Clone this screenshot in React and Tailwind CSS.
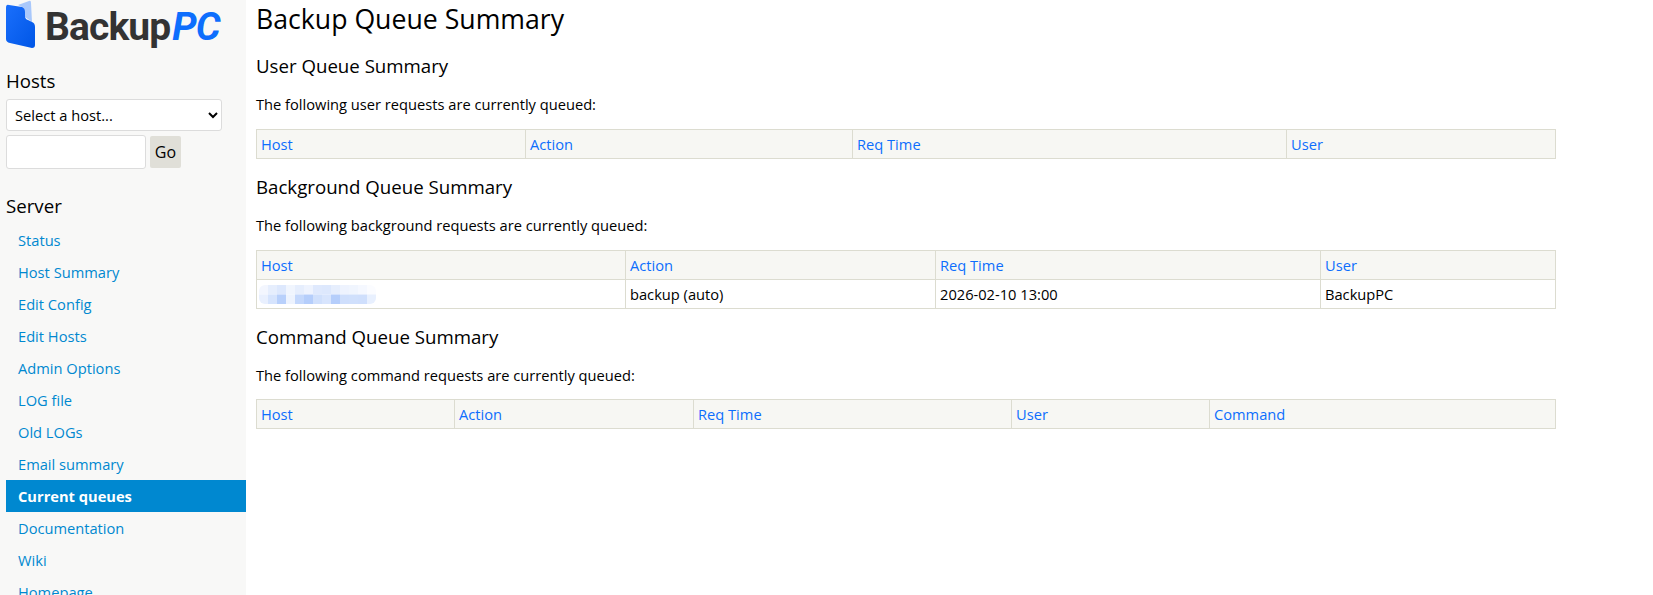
const font = { fontFamily: '"Open Sans", sans-serif' };

const navItems = [
  'Status',
  'Host Summary',
  'Edit Config',
  'Edit Hosts',
  'Admin Options',
  'LOG file',
  'Old LOGs',
  'Email summary',
  'Current queues',
  'Documentation',
  'Wiki',
  'Homepage',
];

// pixelated patch over the host name in the screenshot
const mosaic = [
  ['#f3f6fe', '#e6eefd', '#dde8fd', '#f0f5fe', '#e6eefd', '#eef3fe', '#dfe9fd', '#dde8fd', '#e6eefd', '#eef3fe', '#f0f5fe', '#f5f8ff', '#fbfcff'],
  ['#e9f0fe', '#d6e4fd', '#b8d0fb', '#edf3fe', '#c4d8fc', '#b5cefb', '#d0e0fc', '#d8e5fd', '#b5cefb', '#cfdffc', '#d0e0fc', '#cfdffc', '#e8f0fe'],
];

function Logo() {
  return (
    <div className="flex h-[50px] items-start">
      <svg width="44" height="50" viewBox="0 0 44 50" className="shrink-0">
        <defs>
          <linearGradient id="logoBlue" x1="0" y1="0" x2="1" y2="1">
            <stop offset="0" stopColor="#1a6ffc" />
            <stop offset="1" stopColor="#0056e6" />
          </linearGradient>
        </defs>
        <path d="M18 5 L29 1 Q31 0 31 3 L32 22 L25 17 L24 8 Z" fill="#a9c8fb" />
        <path d="M9 5 L22 7 Q25 8 25 12 L25 16 Q25 19 28 20 L32 22 Q35 23 35 27 L35 45 Q35 48 32 48 L10 43 Q6 42 6 39 L6 8 Q6 4 9 5 Z" fill="url(#logoBlue)" />
      </svg>
      <span className="ml-[1px] mt-[4px] whitespace-nowrap text-[39px] font-bold leading-[46px] tracking-[-0.9px] text-[#333333]" style={{ fontFamily: 'Roboto, sans-serif' }}>
        Backup<span className="ml-[2px] italic text-[#0d6efd]">PC</span>
      </span>
    </div>
  );
}

function Sidebar() {
  return (
    <aside className="h-[595px] w-[246px] shrink-0 overflow-hidden bg-[#f8f8f7]">
      <Logo />
      <h2 className="mt-[17px] pl-[6px] text-[18.67px] leading-[27px] text-black">Hosts</h2>
      <div className="mt-[5px] pl-[6px]">
        <select className="h-[32px] w-[216px] rounded-[3px] border border-[#dcdcdc] bg-white pl-[4px] text-[14.67px] text-black">
          <option>Select a host...</option>
        </select>
        <div className="mt-[4px] flex items-center gap-[4px]">
          <input className="h-[34px] w-[140px] rounded-[3px] border border-[#dcdcdc] bg-white" />
          <button className="h-[32px] w-[31px] rounded-[2px] bg-[#e0dfd8] text-[16px] text-black">Go</button>
        </div>
      </div>
      <h2 className="mt-[23px] pl-[6px] text-[18.67px] leading-[27px] text-black">Server</h2>
      <nav className="mt-[5px] pl-[6px]">
        {navItems.map((item) =>
          item === 'Current queues' ? (
            <a key={item} className="block h-[32px] bg-[#0088d0] pl-[12px] text-[14.67px] font-bold leading-[32px] text-white">
              {item}
            </a>
          ) : (
            <a key={item} className="block h-[32px] pl-[12px] text-[14.67px] leading-[32px] text-[#0088d0]">
              {item}
            </a>
          )
        )}
      </nav>
    </aside>
  );
}

function QueueTable({ columns, rows = [] }) {
  return (
    <table className="w-[1299px] table-fixed border-collapse text-[14.67px]">
      <colgroup>
        {columns.map((c) => (
          <col key={c.name} style={{ width: c.width }} />
        ))}
      </colgroup>
      <thead>
        <tr className="bg-[#f7f7f3]">
          {columns.map((c) => (
            <th key={c.name} className="h-[29px] border border-[#dcdcd0] px-[4px] text-left font-normal text-[#0d6efd]">
              {c.name}
            </th>
          ))}
        </tr>
      </thead>
      <tbody>
        {rows.map((row, i) => (
          <tr key={i}>
            {row.map((cell, j) => (
              <td key={j} className="h-[29px] border border-[#dcdcd0] px-[4px] text-black">
                {cell}
              </td>
            ))}
          </tr>
        ))}
      </tbody>
    </table>
  );
}

function BlurredHost() {
  return (
    <svg width="117" height="19" viewBox="0 0 117 19" className="-ml-[2px] block">
      <defs>
        <clipPath id="hostClip">
          <rect width="117" height="19" rx="6" />
        </clipPath>
      </defs>
      <g clipPath="url(#hostClip)">
        {mosaic.map((row, y) =>
          row.map((fill, x) => <rect key={x} x={x * 9} y={y * 9.5} width="9" height="9.5" fill={fill} />)
        )}
      </g>
    </svg>
  );
}

export default function App() {
  return (
    <div className="flex h-[595px] overflow-hidden bg-white" style={font}>
      <Sidebar />
      <main className="min-w-0 flex-1 pl-[10px] text-black">
        <h1 className="mt-[1px] text-[26.67px] leading-[36px]">Backup Queue Summary</h1>
        <h2 className="mt-[15px] text-[18.67px] leading-[27px]">User Queue Summary</h2>
        <p className="mt-[15px] text-[14.67px] leading-[21px]">The following user requests are currently queued:</p>
        <div className="mt-[14px]">
          <QueueTable
            columns={[
              { name: 'Host', width: 269 },
              { name: 'Action', width: 327 },
              { name: 'Req Time', width: 434 },
              { name: 'User', width: 269 },
            ]}
          />
        </div>
        <h2 className="mt-[14px] text-[18.67px] leading-[27px]">Background Queue Summary</h2>
        <p className="mt-[15px] text-[14.67px] leading-[21px]">The following background requests are currently queued:</p>
        <div className="mt-[14px]">
          <QueueTable
            columns={[
              { name: 'Host', width: 369 },
              { name: 'Action', width: 310 },
              { name: 'Req Time', width: 385 },
              { name: 'User', width: 235 },
            ]}
            rows={[[<BlurredHost />, 'backup (auto)', '2026-02-10 13:00', 'BackupPC']]}
          />
        </div>
        <h2 className="mt-[14px] text-[18.67px] leading-[27px]">Command Queue Summary</h2>
        <p className="mt-[15px] text-[14.67px] leading-[21px]">The following command requests are currently queued:</p>
        <div className="mt-[13px]">
          <QueueTable
            columns={[
              { name: 'Host', width: 198 },
              { name: 'Action', width: 239 },
              { name: 'Req Time', width: 318 },
              { name: 'User', width: 198 },
              { name: 'Command', width: 346 },
            ]}
          />
        </div>
      </main>
    </div>
  );
}
